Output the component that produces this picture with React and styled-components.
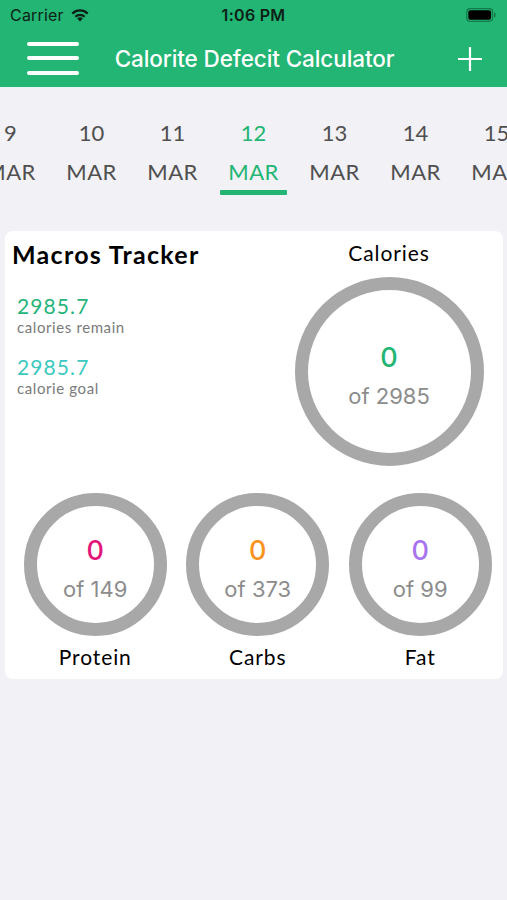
// App.jsx

import React from 'react'
import styled, { createGlobalStyle } from 'styled-components'

const GlobalStyle = createGlobalStyle`
  html, body {
    margin: 0;
    padding: 0;
    background: #f1f1f6;
  }
  body {
    font-family: Inter, "Liberation Sans", sans-serif;
  }
`

const green = '#22b573'

const days = [9, 10, 11, 12, 13, 14, 15]
const macros = [
  { name: 'Protein', of: 149, color: '#e3167a' },
  { name: 'Carbs', of: 373, color: '#f7931e' },
  { name: 'Fat', of: 99, color: '#a774ee' },
]

const Page = styled.div`
  width: 507px;
  min-height: 900px;
  background: #f1f1f6;
`

const Top = styled.header`
  background: ${green};
  height: 87px;
  display: flex;
  flex-direction: column;
`

const StatusBar = styled.div`
  height: 30px;
  display: grid;
  grid-template-columns: 1fr auto 1fr;
  align-items: center;
  padding: 0 10px;
  font-size: 16px;
  color: #0d1f16;
`

const Carrier = styled.div`
  display: flex;
  align-items: center;
  gap: 6px;
  font-weight: 400;
  letter-spacing: 0.2px;
`

const Time = styled.div`
  font-weight: 600;
  letter-spacing: 0.3px;
`

const Battery = styled.div`
  justify-self: end;
  display: flex;
  align-items: center;
  margin-right: 1px;
`

const NavBar = styled.nav`
  flex: 1;
  display: grid;
  grid-template-columns: 1fr auto 1fr;
  align-items: center;
  padding: 0 25px 0 27px;
`

const Burger = styled.div`
  width: 52px;
  display: flex;
  flex-direction: column;
  gap: 10.5px;
  margin-top: -1px;
`

const BurgerBar = styled.span`
  display: block;
  height: 4px;
  border-radius: 2px;
  background: #fff;
`

const Title = styled.h1`
  margin: 0;
  text-align: center;
  color: #fff;
  font-size: 22.5px;
  font-weight: 500;
  letter-spacing: -0.1px;
`

const Plus = styled.div`
  justify-self: end;
  width: 24px;
  height: 24px;
  display: flex;
  align-items: center;
  justify-content: center;
`

const DateStrip = styled.div`
  display: flex;
  justify-content: center;
  overflow: hidden;
  padding-top: 33px;
  height: 144px;
  box-sizing: border-box;
`

const DateItem = styled.div`
  flex: 0 0 81px;
  display: flex;
  flex-direction: column;
  align-items: center;
  color: ${(p) => (p.$active ? green : '#4f4f4f')};
  font-family: Lato, "Noto Sans", sans-serif;
`

const DayNum = styled.div`
  font-size: 22px;
  line-height: 26px;
`

const Month = styled.div`
  font-size: 22px;
  line-height: 26px;
  margin-top: 13px;
  letter-spacing: 0.4px;
`

const Underline = styled.div`
  width: 67px;
  height: 5px;
  border-radius: 1px;
  margin-top: 5px;
  background: ${(p) => (p.$active ? green : 'transparent')};
`

const Card = styled.section`
  margin: 0 4px 0 5px;
  background: #fff;
  border-radius: 8px;
  padding: 8px 0 9px;
  font-family: Lato, "Noto Sans", sans-serif;
`

const TopRow = styled.div`
  display: flex;
`

const Summary = styled.div`
  flex: 1;
  padding-left: 7px;
`

const CardTitle = styled.h2`
  margin: 0;
  font-size: 25px;
  line-height: 30px;
  font-weight: 700;
  letter-spacing: 1.3px;
  color: #000;
`

const Stat = styled.div`
  margin: ${(p) => (p.$first ? '25px' : '19px')} 0 0 5px;
`

const StatValue = styled.div`
  font-size: 21px;
  line-height: 24px;
  letter-spacing: 1.1px;
  color: ${(p) => p.$color};
`

const StatLabel = styled.div`
  font-size: 15px;
  line-height: 18px;
  letter-spacing: 0.6px;
  color: #7a7a7a;
`

const CaloriesCol = styled.div`
  width: 190px;
  margin-right: 19px;
  display: flex;
  flex-direction: column;
  align-items: center;
`

const Label = styled.div`
  font-size: 21px;
  line-height: ${(p) => p.$lh || '28px'};
  letter-spacing: 0.9px;
  color: #000;
`

const Ring = styled.div`
  width: ${(p) => p.$size}px;
  height: ${(p) => p.$size}px;
  box-sizing: border-box;
  border: 13px solid #a8a8a8;
  border-radius: 50%;
  padding-top: 8px;
  display: flex;
  flex-direction: column;
  align-items: center;
  justify-content: center;
  margin-top: ${(p) => p.$mt || 0}px;
  font-family: Inter, "Liberation Sans", sans-serif;
`

const RingValue = styled.div`
  font-size: 27px;
  line-height: 32px;
  font-weight: 500;
  color: ${(p) => p.$color};
`

const RingOf = styled.div`
  font-size: 22px;
  line-height: 28px;
  color: #8c8c8c;
  margin-top: 8px;
`

const MacroRow = styled.div`
  display: grid;
  grid-template-columns: repeat(3, 162.5px);
  padding-left: 9px;
  margin-top: 27px;
`

const Macro = styled.div`
  display: flex;
  flex-direction: column;
  align-items: center;
  gap: 8px;
`

const WifiIcon = () => (
  <svg width="20" height="14" viewBox="0 0 20 14">
    <path d="M10 13.5 L7.2 10.6 A4 4 0 0 1 12.8 10.6 Z" fill="#0d1f16" />
    <path d="M5.4 8.7 A6.6 6.6 0 0 1 14.6 8.7" stroke="#0d1f16" strokeWidth="2.3" fill="none" />
    <path d="M2.3 5.6 A11 11 0 0 1 17.7 5.6" stroke="#0d1f16" strokeWidth="2.3" fill="none" />
  </svg>
)

const BatteryIcon = () => (
  <svg width="30" height="14" viewBox="0 0 30 14">
    <rect x="0.7" y="0.7" width="26" height="12.6" rx="3.5" fill="none" stroke="#137a4a" strokeWidth="1.2" />
    <rect x="2.3" y="2.3" width="22.8" height="9.4" rx="2" fill="#000" />
    <rect x="28" y="4.8" width="1.6" height="4.4" rx="0.8" fill="#137a4a" />
  </svg>
)

const PlusIcon = () => (
  <svg width="24" height="24" viewBox="0 0 24 24">
    <path d="M12 0 V24 M0 12 H24" stroke="#fff" strokeWidth="2.2" />
  </svg>
)

export default function App() {
  return (
    <Page>
      <GlobalStyle />
      <Top>
        <StatusBar>
          <Carrier>
            Carrier <WifiIcon />
          </Carrier>
          <Time>1:06 PM</Time>
          <Battery>
            <BatteryIcon />
          </Battery>
        </StatusBar>
        <NavBar>
          <Burger>
            <BurgerBar />
            <BurgerBar />
            <BurgerBar />
          </Burger>
          <Title>Calorite Defecit Calculator</Title>
          <Plus>
            <PlusIcon />
          </Plus>
        </NavBar>
      </Top>

      <DateStrip>
        {days.map((d) => (
          <DateItem key={d} $active={d === 12}>
            <DayNum>{d}</DayNum>
            <Month>MAR</Month>
            <Underline $active={d === 12} />
          </DateItem>
        ))}
      </DateStrip>

      <Card>
        <TopRow>
          <Summary>
            <CardTitle>Macros Tracker</CardTitle>
            <Stat $first>
              <StatValue $color="#25b47a">2985.7</StatValue>
              <StatLabel>calories remain</StatLabel>
            </Stat>
            <Stat>
              <StatValue $color="#3cc9c1">2985.7</StatValue>
              <StatLabel>calorie goal</StatLabel>
            </Stat>
          </Summary>
          <CaloriesCol>
            <Label>Calories</Label>
            <Ring $size={189} $mt={10}>
              <RingValue $color={green}>0</RingValue>
              <RingOf>of 2985</RingOf>
            </Ring>
          </CaloriesCol>
        </TopRow>

        <MacroRow>
          {macros.map((m) => (
            <Macro key={m.name}>
              <Ring $size={143}>
                <RingValue $color={m.color}>0</RingValue>
                <RingOf>of {m.of}</RingOf>
              </Ring>
              <Label $lh="26px">{m.name}</Label>
            </Macro>
          ))}
        </MacroRow>
      </Card>
    </Page>
  )
}
